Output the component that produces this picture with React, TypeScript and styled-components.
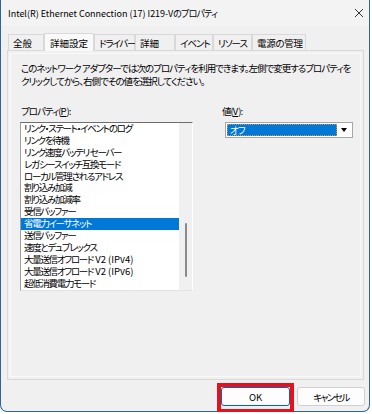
import React from 'react';
import styled, {createGlobalStyle} from 'styled-components';

const GlobalStyle = createGlobalStyle`
  html, body {
    margin: 0;
    padding: 0;
    background: #ffffff;
  }
  body {
    font-family: "Noto Sans CJK JP", "Noto Sans", sans-serif;
    font-size: 9.5px;
    font-feature-settings: "palt";
    letter-spacing: -1px;
    color: #000;
  }
`;

// latin runs inside japanese text keep normal spacing
const Latin = styled.span`
  letter-spacing: 0;
`;

const Window = styled.div`
  width: 370px;
  height: 412px;
  box-sizing: border-box;
  border: 1px solid #2f64a0;
  border-top: none;
  border-radius: 0 0 7px 7px;
  background: #f0f0f0;
  display: flex;
  flex-direction: column;
`;

const TitleBar = styled.div`
  height: 26px;
  display: flex;
  align-items: center;
  justify-content: space-between;
  padding: 0 5px 0 7px;
  background: #f3f3f3;
  font-size: 9px;
  letter-spacing: -0.8px;
  white-space: nowrap;
`;

const CloseIcon = () => (
  <svg width="10" height="10" viewBox="0 0 10 10">
    <path d="M1 1L9 9M9 1L1 9" stroke="#333" strokeWidth="1" fill="none" />
  </svg>
);

const TabStrip = styled.div`
  display: flex;
  align-items: flex-end;
  height: 18px;
  margin-top: 6px;
  padding-left: 7px;
`;

const Tab = styled.div<{$w: number; $ls: number; $active?: boolean}>`
  width: ${p => p.$w}px;
  height: ${p => (p.$active ? 18 : 16)}px;
  box-sizing: border-box;
  border: 1px solid #d9d9d9;
  border-bottom: none;
  background: ${p => (p.$active ? '#f9f9f9' : '#f0f0f0')};
  display: flex;
  align-items: center;
  padding-left: ${p => (p.$active ? 5 : 4)}px;
  letter-spacing: ${p => p.$ls}px;
  white-space: nowrap;
  position: relative;
  z-index: ${p => (p.$active ? 1 : 0)};
  margin-bottom: ${p => (p.$active ? -1 : 0)}px;
`;

const Panel = styled.div`
  height: 330px;
  margin: 0 5px 0 6px;
  box-sizing: border-box;
  border: 1px solid #d9d9d9;
  box-shadow: inset 0 0 0 2px #f0f0f0, inset 0 0 0 3px #f9f9f9;
  padding: 11px 12px 0 12px;
`;

const Description = styled.div`
  padding-left: 1px;
  line-height: 13px;
  white-space: nowrap;
`;

const Columns = styled.div`
  display: flex;
  margin-top: 17px;
`;

const LeftColumn = styled.div`
  width: 173px;
`;

const RightColumn = styled.div`
  margin-left: 28px;
`;

const FieldLabel = styled.div`
  line-height: 13px;
  padding-left: 1px;
  white-space: nowrap;
  u {
    text-decoration: underline;
    letter-spacing: 0;
  }
`;

const ListBox = styled.div`
  margin-top: 4px;
  width: 173px;
  height: 169px;
  box-sizing: border-box;
  border-top: 1px solid #6e6e6e;
  border-left: 1px solid #a0a0a0;
  border-right: 1px solid #ffffff;
  border-bottom: 1px solid #e3e3e3;
  background: #fff;
  display: flex;
`;

const Items = styled.div`
  flex: 1;
  overflow: hidden;
`;

const Item = styled.div<{$selected?: boolean}>`
  height: 11.9px;
  line-height: 11.9px;
  padding-left: 3px;
  letter-spacing: -1.3px;
  white-space: nowrap;
  background: ${p => (p.$selected ? '#0078d7' : 'transparent')};
  color: ${p => (p.$selected ? '#ffffff' : '#000000')};
`;

const ScrollTrack = styled.div`
  width: 13px;
  background: #f0f0f0;
  padding-top: 100px;
  box-sizing: border-box;
`;

const ScrollThumb = styled.div`
  width: 2px;
  height: 54px;
  margin-left: 6px;
  border-radius: 1px;
  background: #8a8a8a;
`;

const Combo = styled.div`
  margin: 4px 0 0 4px;
  width: 128px;
  height: 16px;
  box-sizing: border-box;
  border: 1px solid #a6a6a6;
  background: #fff;
  display: flex;
  padding: 1px;
`;

const ComboValue = styled.div`
  flex: 1;
  background: #0078d7;
  color: #fff;
  outline: 1px dotted #c8925a;
  outline-offset: -1px;
  line-height: 12px;
  padding-left: 3px;
`;

const ComboArrow = styled.div`
  width: 14px;
  display: flex;
  align-items: center;
  justify-content: center;
  &::after {
    content: '';
    border-left: 3px solid transparent;
    border-right: 3px solid transparent;
    border-top: 4px solid #000;
  }
`;

const ButtonRow = styled.div`
  display: flex;
  justify-content: flex-end;
  gap: 7px;
  margin-top: 7px;
  padding-right: 4px;
`;

const ButtonWrap = styled.div`
  position: relative;
`;

const Button = styled.button<{$w: number; $primary?: boolean}>`
  width: ${p => p.$w}px;
  height: 19px;
  box-sizing: border-box;
  border: 1px solid ${p => (p.$primary ? '#0067c0' : '#d0d0d0')};
  border-radius: 3px;
  background: #fdfdfd;
  font-family: inherit;
  font-size: 9.5px;
  font-feature-settings: "palt";
  letter-spacing: ${p => (p.$primary ? 0 : -1.5)}px;
  padding: 0;
  color: #000;
`;

const Highlight = styled.div`
  position: absolute;
  top: -4px;
  left: -4px;
  right: -4px;
  bottom: -7px;
  border: 4px solid #e5121c;
  pointer-events: none;
`;

const tabs = [
  {label: '全般', w: 36, ls: 0},
  {label: '詳細設定', w: 50, ls: 0, active: true},
  {label: 'ドライバー', w: 41, ls: -1.2},
  {label: '詳細', w: 40, ls: 0},
  {label: 'イベント', w: 38, ls: -1},
  {label: 'リソース', w: 39, ls: -1},
  {label: '電源の管理', w: 54, ls: -0.3},
];

const properties: {jp: string; latin?: string}[] = [
  {jp: 'リンク・ステート・イベントのログ'},
  {jp: 'リンクを待機'},
  {jp: 'リンク速度バッテリ セーバー'},
  {jp: 'レガシースイッチ互換モード'},
  {jp: 'ローカル管理されるアドレス'},
  {jp: '割り込み加減'},
  {jp: '割り込み加減率'},
  {jp: '受信バッファー'},
  {jp: '省電力イーサネット'},
  {jp: '送信バッファー'},
  {jp: '速度とデュプレックス'},
  {jp: '大量送信オフロード', latin: ' V2 (IPv4)'},
  {jp: '大量送信オフロード', latin: ' V2 (IPv6)'},
  {jp: '超低消費電力モード'},
];

const App = () => {
  return (
    <>
      <GlobalStyle />
      <Window>
        <TitleBar>
          <span>
            <Latin>Intel(R) Ethernet Connection (17) I219-V</Latin>のプロパティ
          </span>
          <CloseIcon />
        </TitleBar>
        <TabStrip>
          {tabs.map(t => (
            <Tab key={t.label} $w={t.w} $ls={t.ls} $active={t.active}>
              {t.label}
            </Tab>
          ))}
        </TabStrip>
        <Panel>
          <Description>
            このネットワーク アダプターでは次のプロパティを利用できます。左側で変更するプロパティを
            <br />
            クリックしてから、右側でその値を選択してください。
          </Description>
          <Columns>
            <LeftColumn>
              <FieldLabel>
                プロパティ(<u>P</u>):
              </FieldLabel>
              <ListBox>
                <Items>
                  {properties.map(p => (
                    <Item key={p.jp + (p.latin ?? '')} $selected={p.jp === '省電力イーサネット'}>
                      {p.jp}
                      {p.latin && <Latin>{p.latin}</Latin>}
                    </Item>
                  ))}
                </Items>
                <ScrollTrack>
                  <ScrollThumb />
                </ScrollTrack>
              </ListBox>
            </LeftColumn>
            <RightColumn>
              <FieldLabel>
                値(<u>V</u>):
              </FieldLabel>
              <Combo>
                <ComboValue>オフ</ComboValue>
                <ComboArrow />
              </Combo>
            </RightColumn>
          </Columns>
        </Panel>
        <ButtonRow>
          <ButtonWrap>
            <Button $w={69} $primary>
              OK
            </Button>
            <Highlight />
          </ButtonWrap>
          <Button $w={68}>キャンセル</Button>
        </ButtonRow>
      </Window>
    </>
  );
};

export default App;
